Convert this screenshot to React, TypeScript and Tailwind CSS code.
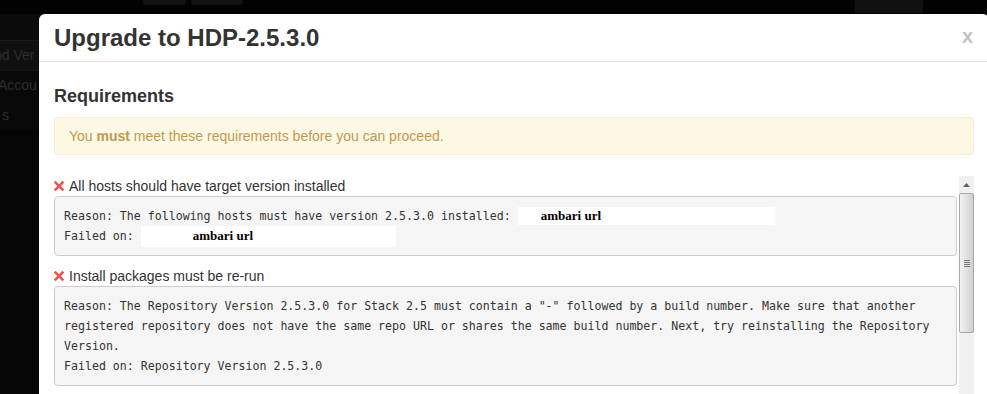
import React from 'react'

const sans = { fontFamily: '"Liberation Sans", Arial, sans-serif' }
const mono = { fontFamily: '"DejaVu Sans Mono", Consolas, monospace' }
const serif = { fontFamily: '"Liberation Serif", "Times New Roman", serif' }

function RedX() {
  return (
    <svg width="10" height="10" viewBox="0 0 10 10" className="shrink-0">
      <path d="M1.6 1.6 L8.4 8.4 M8.4 1.6 L1.6 8.4" stroke="#f24f4f" strokeWidth="2.6" strokeLinecap="square" />
    </svg>
  )
}

function Redacted({ width, height, pad }: { width: number; height: number; pad: number }) {
  return (
    <span
      className="inline-flex items-center bg-white align-middle text-[13px] font-bold text-black"
      style={{ ...serif, width, height, paddingLeft: pad }}
    >
      ambari url
    </span>
  )
}

function Scrollbar() {
  return (
    <div className="flex w-[15px] shrink-0 flex-col bg-[#f0f0f0]">
      <div className="flex h-[17px] items-center justify-center">
        <svg width="7" height="4" viewBox="0 0 7 4">
          <path d="M0 4 L3.5 0 L7 4 Z" fill="#606060" />
        </svg>
      </div>
      <div className="flex h-[140px] items-center justify-center rounded-[2px] border border-[#a8a8a8] bg-gradient-to-r from-[#f2f2f2] via-[#e2e2e2] to-[#cfcfcf]">
        <div className="flex flex-col gap-[1px]">
          <div className="h-[1px] w-[6px] bg-[#777]" />
          <div className="h-[1px] w-[6px] bg-[#777]" />
          <div className="h-[1px] w-[6px] bg-[#777]" />
          <div className="h-[1px] w-[6px] bg-[#777]" />
        </div>
      </div>
      <div className="flex-1" />
    </div>
  )
}

function Check({ title, lines }: { title: string; lines: React.ReactNode[] }) {
  return (
    <div className="mb-[10px]">
      <div className="flex h-[20px] items-center gap-[5px] text-[14px] text-[#333]" style={sans}>
        <RedX />
        <span>{title}</span>
      </div>
      <div
        className="rounded-[4px] border border-[#cccccc] bg-[#f5f5f5] px-[9px] py-[9px] text-[11.6px] leading-[20px] text-[#333]"
        style={mono}
      >
        {lines.map((l, i) => (
          <div key={i} className="flex h-[20px] items-center whitespace-pre">
            {l}
          </div>
        ))}
      </div>
    </div>
  )
}

export default function App() {
  return (
    <div className="relative h-[394px] w-[987px] overflow-hidden bg-[#050505]" style={sans}>
      {/* page behind the backdrop */}
      <div className="flex h-[14px] items-start bg-[#020202]">
        <div className="ml-[143px] h-[5px] w-[43px] rounded-b-[3px] bg-[#121212]" />
        <div className="ml-[5px] h-[5px] w-[52px] rounded-b-[3px] bg-[#121212]" />
        <div className="ml-[612px] h-[13px] w-[68px] bg-[#111111]" />
      </div>
      <div className="h-[26px] bg-[#0b0b0b]" />
      <div className="flex h-[30px] items-center border-t border-[#1a1a1a] bg-[#101010] text-[14px] text-[#2e2e2e]">
        <span className="-ml-[6px]">nd Ver</span>
      </div>
      <div className="flex h-[30px] items-center border-t border-[#161616] bg-[#090909] text-[14px] text-[#2e2e2e]">
        <span className="-ml-[2px]">Accou</span>
      </div>
      <div className="flex h-[30px] items-center bg-[#090909] text-[14px] text-[#2e2e2e]">
        <span className="ml-[2px]">s</span>
      </div>

      {/* modal */}
      <div className="absolute left-[39px] top-[14px] h-[400px] w-[950px] rounded-[6px] bg-white">
        <div className="flex h-[48px] items-center justify-between border-b border-[#e5e5e5] pl-[15px] pr-[15px]">
          <h3 className="text-[24px] font-bold leading-[30px] text-[#333]">Upgrade to HDP-2.5.3.0</h3>
          <span className="-mt-[4px] mr-[1px] text-[20px] font-bold leading-[20px] text-[#c4c4c4]">x</span>
        </div>
        <div className="px-[15px] pt-[24px]">
          <h4 className="text-[18px] font-bold leading-[20px] text-[#333]">Requirements</h4>
          <div className="mt-[11px] rounded-[4px] border border-[#faebcc] bg-[#fcf8e3] px-[14px] py-[8px] text-[14px] leading-[20px] text-[#c09853]">
            You <b>must</b> meet these requirements before you can proceed.
          </div>
          <div className="mt-[21px] flex h-[220px] gap-[2px]">
            <div className="flex-1">
              <Check
                title="All hosts should have target version installed"
                lines={[
                  <>
                    Reason: The following hosts must have version 2.5.3.0 installed:{' '}
                    <Redacted width={257} height={18} pad={23} />
                  </>,
                  <>
                    Failed on: <Redacted width={255} height={21} pad={52} />
                  </>,
                ]}
              />
              <Check
                title="Install packages must be re-run"
                lines={[
                  'Reason: The Repository Version 2.5.3.0 for Stack 2.5 must contain a "-" followed by a build number. Make sure that another',
                  'registered repository does not have the same repo URL or shares the same build number. Next, try reinstalling the Repository',
                  'Version.',
                  'Failed on: Repository Version 2.5.3.0',
                ]}
              />
            </div>
            <Scrollbar />
          </div>
        </div>
      </div>
    </div>
  )
}
